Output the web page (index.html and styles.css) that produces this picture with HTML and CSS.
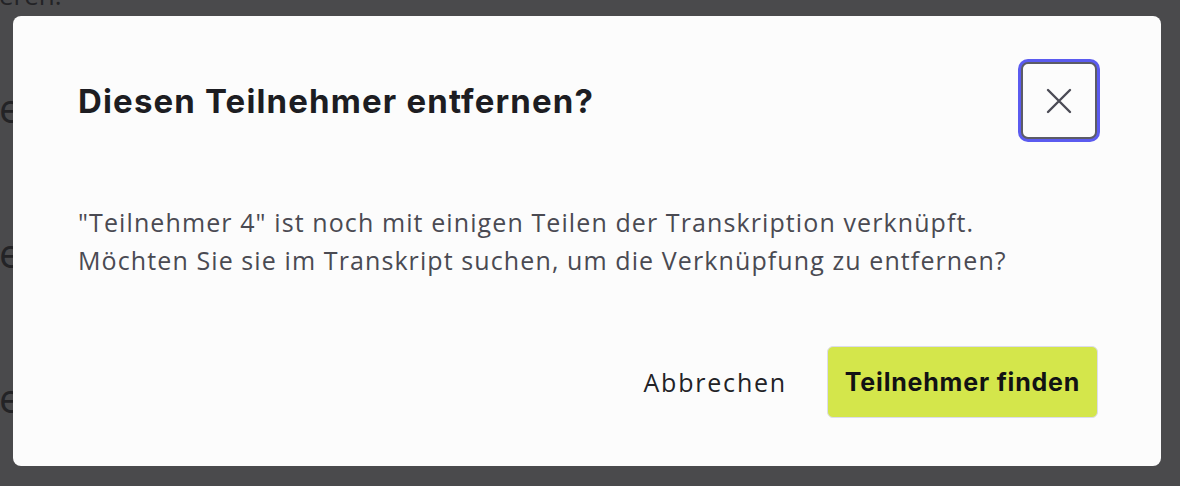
FILE: index.html
```html
<!DOCTYPE html>
<html lang="de">
<head>
<meta charset="utf-8">
<link rel="stylesheet" href="styles.css">
</head>
<body>
<div class="page">
  <p class="bg-line bg-first">eren.</p>
  <p class="bg-line">e</p>
  <p class="bg-line">e</p>
  <p class="bg-line bg-last">e</p>
</div>
<div class="overlay">
  <div class="modal" role="dialog">
    <div class="modal-header">
      <h2 class="modal-title">Diesen Teilnehmer entfernen?</h2>
      <button class="close-btn" aria-label="Schließen">
        <svg width="26" height="26" viewBox="0 0 26 26"><path d="M2 2 L24 24 M24 2 L2 24" stroke="#4b4b55" stroke-width="2.4" stroke-linecap="round" fill="none"/></svg>
      </button>
    </div>
    <div class="modal-body">
      <p>"Teilnehmer 4" ist noch mit einigen Teilen der Transkription verknüpft.<br>Möchten Sie sie im Transkript suchen, um die Verknüpfung zu entfernen?</p>
    </div>
    <div class="modal-footer">
      <button class="btn-cancel">Abbrechen</button>
      <button class="btn-primary">Teilnehmer finden</button>
    </div>
  </div>
</div>
</body>
</html>
```
FILE: styles.css
```css
html, body {
  margin: 0;
  padding: 0;
  width: 1180px;
  height: 486px;
  overflow: hidden;
  background: #4a4a4c;
  font-family: "Open Sans", "Lato", sans-serif;
}
.page {
  display: flex;
  flex-direction: column;
}
.bg-line {
  margin: 0 0 0 -1px;
  height: 145px;
  font-size: 40px;
  color: #232326;
  line-height: 40px;
  flex-shrink: 0;
}
.bg-first {
  font-size: 26px;
  margin-top: -25px;
  height: 113px;
}
.bg-last {
  height: 40px;
}
.overlay {
  position: fixed;
  inset: 0;
  display: flex;
  align-items: flex-start;
  justify-content: flex-start;
  padding: 16px 0 0 13px;
}
.modal {
  width: 1148px;
  height: 450px;
  box-sizing: border-box;
  background: #fcfcfc;
  border-radius: 8px;
  padding: 46px 63px 0 65px;
  display: flex;
  flex-direction: column;
}
.modal-header {
  display: flex;
  align-items: center;
  justify-content: space-between;
}
.modal-title {
  margin: 0;
  font-family: "Inter", "Open Sans", sans-serif;
  font-size: 33px;
  font-weight: 700;
  letter-spacing: 1.15px;
  color: #1d1d22;
}
.close-btn {
  width: 76px;
  height: 77px;
  box-sizing: border-box;
  border: 2px solid #5c5c66;
  border-radius: 7px;
  background: #fcfcfc;
  box-shadow: 0 0 0 3px #5b5bf0;
  display: flex;
  align-items: center;
  justify-content: center;
  padding: 0;
  margin-right: 1px;
}
.modal-body {
  margin-top: 64px;
}
.modal-body p {
  margin: 0;
  font-size: 25px;
  line-height: 38px;
  letter-spacing: 1.1px;
  color: #4a4a52;
}
.modal-footer {
  margin-top: 67px;
  display: flex;
  justify-content: flex-end;
  align-items: center;
  gap: 40px;
}
.btn-cancel {
  background: none;
  border: none;
  font-family: inherit;
  font-size: 25px;
  letter-spacing: 1.8px;
  color: #222226;
  padding: 0;
}
.btn-primary {
  width: 271px;
  height: 72px;
  box-sizing: border-box;
  background: #d4e64b;
  border: 1.5px solid #dcdcec;
  border-radius: 6px;
  font-family: "Inter", "Open Sans", sans-serif;
  font-size: 25px;
  font-weight: 700;
  letter-spacing: 0.8px;
  color: #121214;
  padding: 0;
}
```
